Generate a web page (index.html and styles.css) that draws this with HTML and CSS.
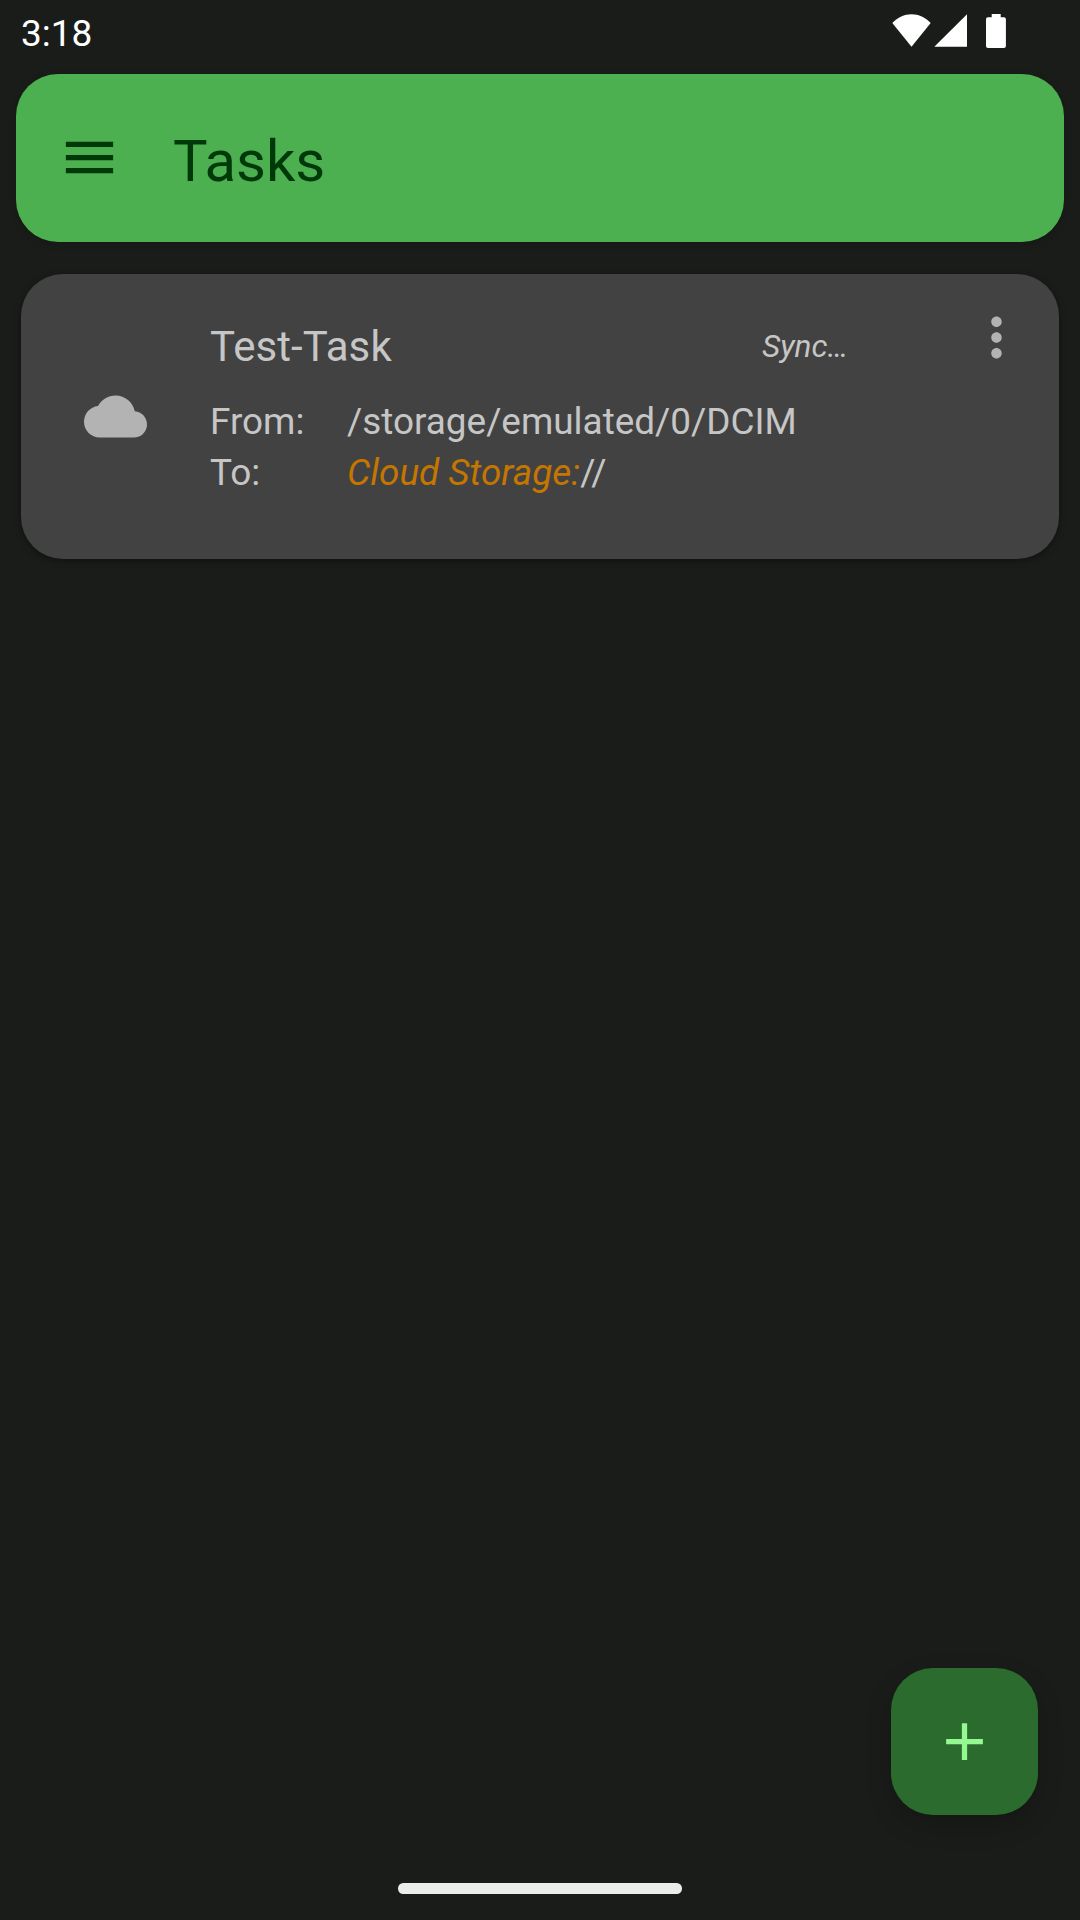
FILE: index.html
```html
<!DOCTYPE html>
<html lang="en">
<head>
<meta charset="utf-8">
<title>Tasks</title>
<link rel="stylesheet" href="styles.css">
</head>
<body>
<div class="screen">
  <header class="status-bar">
    <span class="clock">3:18</span>
    <svg class="status-icons" width="116" height="36" viewBox="0 0 116 36" fill="#fff">
      <path d="M.3 9.100C5.800 3.200 12.300.2 19.500.2s13.700 3 19.200 8.900L19.500 32.700Z"/>
      <path d="M42.300 32.700H75V.3Z"/>
      <path d="M99.700 0h9v3.200h3.200a2 2 0 0 1 2 2V31.900a2 2 0 0 1-2 2H96a2 2 0 0 1-2-2V5.200a2 2 0 0 1 2-2h3.700Z"/>
    </svg>
  </header>

  <div class="app-bar">
    <svg class="icon menu-icon" viewBox="0 0 24 24"><path d="M3 18h18v-2H3v2zm0-5h18v-2H3v2zm0-7v2h18V6H3z"/></svg>
    <h1 class="app-title">Tasks</h1>
  </div>

  <main class="task-list">
    <article class="task-card">
      <svg class="icon cloud-icon" viewBox="0 0 24 24"><path d="M19.350 10.040C18.670 6.590 15.640 4 12 4 9.110 4 6.600 5.640 5.350 8.040 2.340 8.360 0 10.910 0 14c0 3.310 2.690 6 6 6h13c2.760 0 5-2.240 5-5 0-2.640-2.050-4.780-4.650-4.960z"/></svg>
      <div class="task-body">
        <div class="task-head">
          <h2 class="task-name">Test-Task</h2>
          <span class="task-status">Sync…</span>
        </div>
        <dl class="task-paths">
          <dt>From:</dt>
          <dd>/storage/emulated/0/DCIM</dd>
          <dt>To:</dt>
          <dd><em class="remote">Cloud Storage:</em>//</dd>
        </dl>
      </div>
      <svg class="icon more-icon" viewBox="0 0 24 24"><path d="M12 8c1.100 0 2-.9 2-2s-.9-2-2-2-2 .9-2 2 .9 2 2 2zm0 2c-1.100 0-2 .9-2 2s.9 2 2 2 2-.9 2-2-.9-2-2-2zm0 6c-1.100 0-2 .9-2 2s.9 2 2 2 2-.9 2-2-.9-2-2-2z"/></svg>
    </article>
  </main>

  <button class="fab" aria-label="Add task">
    <svg class="icon" viewBox="0 0 24 24"><path d="M19 13h-6v6h-2v-6H5v-2h6V5h2v6h6v2z"/></svg>
  </button>
  <div class="home-handle"></div>
</div>
</body>
</html>
```
FILE: styles.css
```css
* {
  box-sizing: border-box;
  margin: 0;
  padding: 0;
}

body {
  background: #1a1c19;
  font-family: Roboto, "Noto Sans", sans-serif;
  font-weight: 400;
}

.screen {
  display: flex;
  flex-direction: column;
  width: 1080px;
  height: 1920px;
  background: #1a1c19;
  overflow: hidden;
}

.status-bar {
  display: flex;
  justify-content: space-between;
  align-items: flex-start;
  height: 74px;
  padding: 14px 72px 0 21px;
}

.clock {
  margin-top: -2px;
  color: #fff;
  font-size: 37px;
  line-height: 44px;
}

.icon {
  display: block;
  flex: none;
  width: 63px;
  height: 63px;
}

.app-bar {
  display: flex;
  align-items: flex-start;
  gap: 52px;
  height: 168px;
  margin: 0 16px;
  padding: 52px 0 0 42px;
  border-radius: 42px;
  background: #4caf50;
  box-shadow: 0 2px 8px rgba(0, 0, 0, 0.15);
}

.menu-icon {
  fill: #003909;
}

.app-title {
  color: #003909;
  font-size: 58px;
  font-weight: 400;
  line-height: 70px;
}

.task-list {
  flex: 1;
  padding: 32px 21px 0;
}

.task-card {
  display: flex;
  align-items: flex-start;
  height: 285px;
  padding: 32px 31px 0 63px;
  border-radius: 42px;
  background: #424242;
  box-shadow: 0 2px 7px rgba(0, 0, 0, 0.35);
  color: #c6c6c6;
}

.cloud-icon {
  margin-top: 79px;
  fill: #b3b3b3;
}

.task-body {
  flex: 1;
  margin-left: 63px;
  padding-top: 16px;
}

.task-head {
  display: flex;
  align-items: flex-start;
}

.task-name {
  width: 552px;
  font-size: 42px;
  font-weight: 400;
  letter-spacing: 0.1px;
  line-height: 50px;
}

.task-status {
  padding-top: 6px;
  font-size: 31.5px;
  font-style: italic;
  line-height: 38px;
}

.task-paths {
  display: grid;
  grid-template-columns: 137px 1fr;
  padding-top: 24px;
  font-size: 36.9px;
  line-height: 51px;
}

.remote {
  color: #c47600;
}

.more-icon {
  fill: #b3b3b3;
}

.fab {
  display: flex;
  align-items: center;
  align-self: flex-end;
  justify-content: center;
  width: 147px;
  height: 147px;
  margin-right: 42px;
  border: 0;
  border-radius: 42px;
  background: #2b6b2e;
  box-shadow: 0 10px 26px rgba(0, 0, 0, 0.18);
  fill: #94f990;
}

.home-handle {
  align-self: center;
  width: 284px;
  height: 10.5px;
  margin: 68px 0 26.500px;
  border-radius: 5.250px;
  background: #ececec;
}
```
